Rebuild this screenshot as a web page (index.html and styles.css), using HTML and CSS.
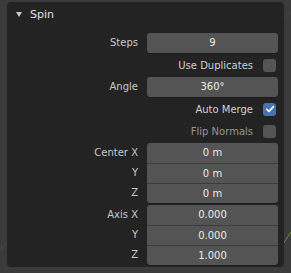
FILE: index.html
```html
<!DOCTYPE html>
<html lang="en">
<head>
  <meta charset="UTF-8" />
  <title>Spin</title>
  <link rel="stylesheet" href="styles.css">
</head>
<body>
  <svg class="viewport" width="291" height="273" viewBox="0 0 291 273">
    <line x1="0" y1="250" x2="8" y2="240" stroke="#4a4a4a" stroke-width="1" />
    <line x1="283" y1="244" x2="291" y2="232" stroke="#6b8f2a" stroke-width="1" />
    <line x1="284" y1="18" x2="291" y2="12" stroke="#444" stroke-width="1" />
  </svg>

  <div class="panel">
    <div class="panel-header">
      <span class="arrow"></span>
      <span class="title">Spin</span>
    </div>

    <div class="rows">
      <div class="row">
        <div class="label">Steps</div>
        <div class="field">9</div>
      </div>
      <div class="row">
        <div class="label"></div>
        <div class="check-line">
          <span class="check-label">Use Duplicates</span>
          <span class="box"></span>
        </div>
      </div>
      <div class="row">
        <div class="label">Angle</div>
        <div class="field">360°</div>
      </div>
      <div class="row">
        <div class="label"></div>
        <div class="check-line">
          <span class="check-label">Auto Merge</span>
          <span class="box checked">
            <svg width="12" height="12" viewBox="0 0 12 12"><path d="M2.8 6.2 L5 8.4 L9.4 3.6" fill="none" stroke="#fff" stroke-width="1.6" stroke-linecap="round" stroke-linejoin="round" /></svg>
          </span>
        </div>
      </div>
      <div class="row">
        <div class="label"></div>
        <div class="check-line">
          <span class="check-label dim">Flip Normals</span>
          <span class="box"></span>
        </div>
      </div>

      <div class="group-row">
        <div class="labels">
          <div class="label">Center X</div>
          <div class="label">Y</div>
          <div class="label">Z</div>
        </div>
        <div class="group">
          <div class="cell">0 m</div>
          <div class="cell">0 m</div>
          <div class="cell">0 m</div>
        </div>
      </div>

      <div class="group-row">
        <div class="labels">
          <div class="label">Axis X</div>
          <div class="label">Y</div>
          <div class="label">Z</div>
        </div>
        <div class="group">
          <div class="cell">0.000</div>
          <div class="cell">0.000</div>
          <div class="cell">1.000</div>
        </div>
      </div>
    </div>
  </div>
</body>
</html>
```

FILE: styles.css
```css
* {
  box-sizing: border-box;
}

html, body {
  margin: 0;
  padding: 0;
  width: 291px;
  height: 273px;
  overflow: hidden;
  background: #3b3b3b;
  font-family: 'DejaVu Sans', sans-serif;
  font-size: 10px;
}

body {
  position: relative;
  padding: 2px 0 0 7px;
}

.viewport {
  position: absolute;
  left: 0;
  top: 0;
}

.panel {
  position: relative;
  width: 277px;
  height: 265px;
  background: #232323;
  border-radius: 4px;
}

.panel-header {
  height: 25px;
  display: flex;
  align-items: center;
  padding-left: 9px;
  color: #e0e0e0;
  font-size: 11px;
}

.arrow {
  width: 0;
  height: 0;
  border-left: 3px solid transparent;
  border-right: 3px solid transparent;
  border-top: 5px solid #c8c8c8;
  margin-right: 8px;
}

.rows {
  display: flex;
  flex-direction: column;
  gap: 2px;
  padding: 6px 6px 0 0;
}

.row {
  display: grid;
  grid-template-columns: 131px 131px;
  column-gap: 9px;
  height: 20px;
  align-items: center;
}

.label {
  text-align: right;
  color: #c8c8c8;
  line-height: 20px;
  height: 20px;
}

.field {
  height: 20px;
  line-height: 20px;
  background: #545454;
  border-radius: 3px;
  color: #ebebeb;
  text-align: center;
  box-shadow: 0 1px 0 #1b1b1b;
}

.check-line {
  display: flex;
  justify-content: flex-end;
  align-items: center;
  gap: 10px;
  padding-right: 2px;
  margin-left: -60px;
}

.check-label {
  color: #d0d0d0;
}

.check-label.dim {
  color: #969696;
}

.box {
  width: 13px;
  height: 13px;
  border-radius: 3px;
  background: #545454;
  display: flex;
  align-items: center;
  justify-content: center;
}

.box.checked {
  background: #4772b3;
}

.group-row {
  display: grid;
  grid-template-columns: 131px 131px;
  column-gap: 9px;
}

.labels {
  display: flex;
  flex-direction: column;
}

.group {
  background: #545454;
  border-radius: 3px;
  overflow: hidden;
  box-shadow: 0 1px 0 #1b1b1b;
}

.cell {
  height: 20px;
  line-height: 20px;
  text-align: center;
  color: #ebebeb;
  border-top: 1px solid #3c3c3c;
}

.cell:first-child {
  border-top: none;
}
```
